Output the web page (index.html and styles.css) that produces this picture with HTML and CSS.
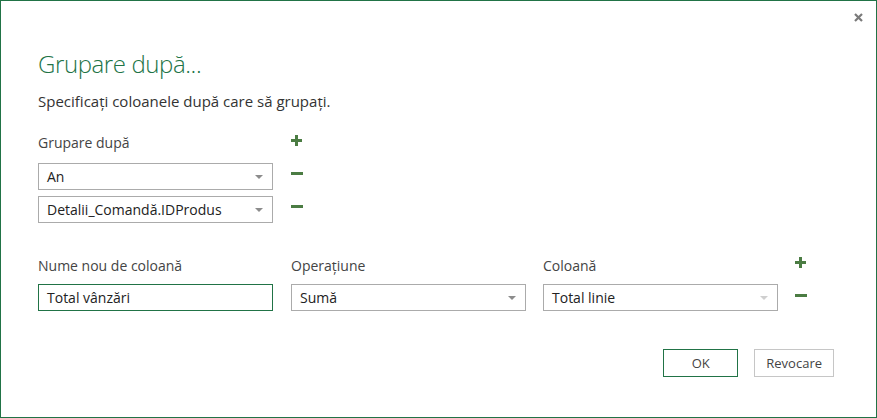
FILE: index.html
```html
<!DOCTYPE html>
<html lang="ro">
<head>
<meta charset="utf-8">
<title>Grupare după</title>
<link rel="stylesheet" href="styles.css">
</head>
<body>
<div class="dialog">
  <button class="close" aria-label="Închidere">
    <svg width="9" height="9" viewBox="0 0 9 9"><path d="M1 1 L8 8 M8 1 L1 8" stroke="#7a7a7a" stroke-width="2.2" fill="none"/></svg>
  </button>
  <h1 class="title">Grupare după...</h1>
  <p class="subtitle">Specificaţi coloanele după care să grupaţi.</p>

  <div class="group-grid">
    <div class="label">Grupare după</div>
    <div class="icon plus-cell"><svg width="11" height="11" viewBox="0 0 11 11"><path d="M0 5.5 H11 M5.5 0 V11" stroke="#4b7c43" stroke-width="3"/></svg></div>

    <div class="select first"><span>An</span><i class="arrow"></i></div>
    <div class="icon minus-cell first"><svg width="12" height="3" viewBox="0 0 12 3"><rect width="12" height="3" fill="#4b7c43"/></svg></div>

    <div class="select"><span>Detalii_Comandă.IDProdus</span><i class="arrow"></i></div>
    <div class="icon minus-cell"><svg width="12" height="3" viewBox="0 0 12 3"><rect width="12" height="3" fill="#4b7c43"/></svg></div>
  </div>

  <div class="agg-grid">
    <div class="label">Nume nou de coloană</div>
    <div class="label">Operaţiune</div>
    <div class="label">Coloană</div>
    <div class="icon plus-cell"><svg width="11" height="11" viewBox="0 0 11 11"><path d="M0 5.5 H11 M5.5 0 V11" stroke="#4b7c43" stroke-width="3"/></svg></div>

    <div class="select input focused"><span>Total vânzări</span></div>
    <div class="select"><span>Sumă</span><i class="arrow"></i></div>
    <div class="select"><span>Total linie</span><i class="arrow light"></i></div>
    <div class="icon minus-cell"><svg width="12" height="3" viewBox="0 0 12 3"><rect width="12" height="3" fill="#4b7c43"/></svg></div>
  </div>

  <div class="actions">
    <button class="btn primary">OK</button>
    <button class="btn">Revocare</button>
  </div>
</div>
</body>
</html>
```

FILE: styles.css
```css
html, body {
  margin: 0;
  padding: 0;
  background: #fff;
}

.dialog {
  position: relative;
  width: 877px;
  height: 418px;
  box-sizing: border-box;
  border: 1px solid #217346;
  padding: 47px 0 0 37px;
  font-family: "Open Sans", "Noto Sans", "Liberation Sans", sans-serif;
  color: #444;
}

.close {
  position: absolute;
  top: 12px;
  right: 13px;
  width: 9px;
  height: 9px;
  padding: 0;
  border: 0;
  background: none;
  display: flex;
}

.title {
  margin: 0;
  font-size: 24px;
  font-weight: 300;
  line-height: 32px;
  color: #217346;
  letter-spacing: -0.4px;
}

.subtitle {
  margin: 11px 0 0;
  font-size: 15px;
  line-height: 20px;
  color: #333;
}

.label {
  font-size: 14px;
  line-height: 20px;
  color: #444;
}

.group-grid {
  margin-top: 22px;
  display: grid;
  grid-template-columns: 253px auto;
  row-gap: 6px;
  justify-content: start;
}

.group-grid > .first {
  margin-top: 4px;
}

.icon {
  display: flex;
  align-items: flex-start;
}

.plus-cell {
  padding-top: 2px;
}

.minus-cell {
  padding-top: 9px;
}

.group-grid > .minus-cell.first {
  margin-top: 4px;
}

.select {
  position: relative;
  width: 235px;
  height: 27px;
  box-sizing: border-box;
  border: 1px solid #ababab;
  padding: 0 0 0 8px;
  display: flex;
  align-items: center;
  font-size: 14px;
  color: #222;
  background: #fff;
}

.select.focused {
  border-color: #217346;
}

.arrow {
  position: absolute;
  right: 9px;
  top: 11px;
  width: 0;
  height: 0;
  border-left: 4px solid transparent;
  border-right: 4px solid transparent;
  border-top: 4px solid #8c8c8c;
}

.arrow.light {
  border-top-color: #cfcfcf;
}

.agg-grid {
  margin-top: 33px;
  display: grid;
  grid-template-columns: 253px 252px 252px auto;
  row-gap: 8px;
  justify-content: start;
}

.agg-grid .plus-cell {
  padding-top: 1px;
}

.agg-grid .minus-cell {
  padding-top: 10px;
}

.actions {
  margin-top: 38px;
  margin-right: 42px;
  display: flex;
  justify-content: flex-end;
  gap: 16px;
}

.btn {
  height: 28px;
  min-width: 75px;
  box-sizing: border-box;
  border: 1px solid #c6c6c6;
  background: #fff;
  font-family: inherit;
  font-size: 13px;
  color: #444;
  padding: 0 11px;
}

.btn.primary {
  border-color: #217346;
}
```
